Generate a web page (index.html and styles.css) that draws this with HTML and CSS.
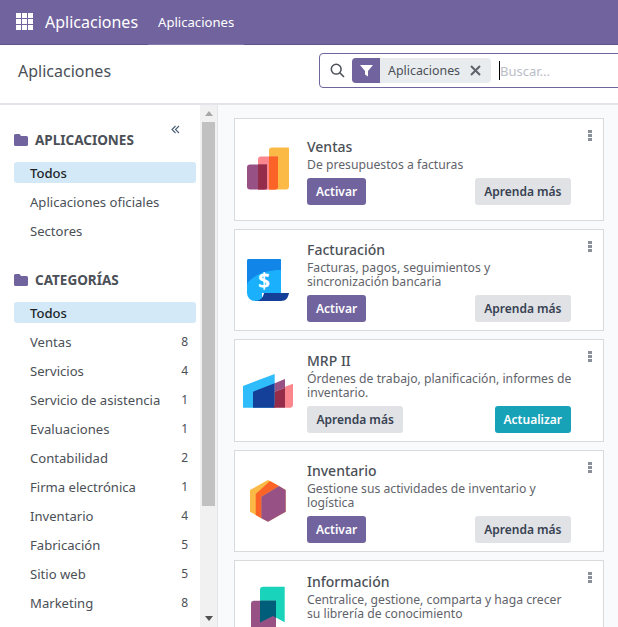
FILE: index.html
```html
<!DOCTYPE html>
<html lang="es">
<head>
<meta charset="utf-8">
<title>Aplicaciones</title>
<link rel="stylesheet" href="styles.css">
</head>
<body>
<header class="navbar">
  <svg class="apps-icon" width="17" height="17" viewBox="0 0 17 17" aria-hidden="true"><path fill="#fff" d="M0 0h5v5H0zM6 0h5v5H6zM12 0h5v5h-5zM0 6h5v5H0zM6 6h5v5H6zM12 6h5v5h-5zM0 12h5v5H0zM6 12h5v5H6zM12 12h5v5h-5z"/></svg>
  <span class="brand">Aplicaciones</span>
  <span class="nav-item">Aplicaciones</span>
</header>
<section class="control-panel">
  <h1 class="page-title">Aplicaciones</h1>
  <div class="searchbox">
    <svg class="glass" width="15" height="15" viewBox="0 0 15 15" aria-hidden="true"><circle cx="6.2" cy="6.2" r="4.9" fill="none" stroke="#4b5057" stroke-width="1.5"/><path d="M9.8 9.8l4.2 4.2" stroke="#4b5057" stroke-width="1.6" fill="none"/></svg>
    <div class="chip">
      <span class="chip-icon"><svg width="13" height="13" viewBox="0 0 13 13" aria-hidden="true"><path fill="#fff" d="M0 1h13L8 7v5.5L5 10.500V7z"/></svg></span>
      <span class="chip-label">Aplicaciones</span>
      <svg class="chip-x" width="11" height="11" viewBox="0 0 11 11" aria-hidden="true"><path d="M1 1l9 9M10 1l-9 9" stroke="#5f636a" stroke-width="2" fill="none"/></svg>
    </div>
    <span class="caret"></span>
    <span class="placeholder">Buscar...</span>
  </div>
</section>
<div class="content">
  <aside class="sidebar">
    <svg class="collapse" width="9" height="9" viewBox="0 0 9 9" aria-hidden="true"><path d="M4.500 1L1 4.500 4.500 8M8 1L4.500 4.500 8 8" stroke="#4b5c74" stroke-width="1.100" fill="none"/></svg>
    <h2 class="group-title first">
      <svg class="folder" width="14" height="12" viewBox="0 0 14 12" aria-hidden="true"><path fill="#71639e" d="M1.500 0h4l1.500 2h5.500A1.500 1.500 0 0 1 14 3.500v7a1.500 1.500 0 0 1-1.500 1.500h-11A1.500 1.500 0 0 1 0 10.500v-9A1.500 1.500 0 0 1 1.500 0z"/></svg>
      APLICACIONES
    </h2>
    <ul class="facets">
      <li class="facet active"><span>Todos</span></li>
      <li class="facet"><span>Aplicaciones oficiales</span></li>
      <li class="facet"><span>Sectores</span></li>
    </ul>
    <h2 class="group-title">
      <svg class="folder" width="14" height="12" viewBox="0 0 14 12" aria-hidden="true"><path fill="#71639e" d="M1.500 0h4l1.500 2h5.500A1.500 1.500 0 0 1 14 3.500v7a1.500 1.500 0 0 1-1.500 1.500h-11A1.500 1.500 0 0 1 0 10.500v-9A1.500 1.500 0 0 1 1.500 0z"/></svg>
      CATEGORÍAS
    </h2>
    <ul class="facets">
      <li class="facet active"><span>Todos</span></li>
      <li class="facet"><span>Ventas</span><b class="count">8</b></li>
      <li class="facet"><span>Servicios</span><b class="count">4</b></li>
      <li class="facet"><span>Servicio de asistencia</span><b class="count">1</b></li>
      <li class="facet"><span>Evaluaciones</span><b class="count">1</b></li>
      <li class="facet"><span>Contabilidad</span><b class="count">2</b></li>
      <li class="facet"><span>Firma electrónica</span><b class="count">1</b></li>
      <li class="facet"><span>Inventario</span><b class="count">4</b></li>
      <li class="facet"><span>Fabricación</span><b class="count">5</b></li>
      <li class="facet"><span>Sitio web</span><b class="count">5</b></li>
      <li class="facet"><span>Marketing</span><b class="count">8</b></li>
    </ul>
  </aside>
  <div class="scrollbar">
    <span class="arrow up"></span>
    <span class="thumb"></span>
    <span class="arrow down"></span>
  </div>
  <main class="kanban">
    <article class="card">
      <svg class="logo" width="64" height="64" viewBox="0 0 64 64" aria-hidden="true">
        <path fill="#fbb945" d="M36 10.500h17v39a3 3 0 0 1-3 3H33v-39a3 3 0 0 1 3-3z"/>
        <path fill="#fc868d" d="M25 19.500h17v30a3 3 0 0 1-3 3H22v-30a3 3 0 0 1 3-3z"/>
        <path fill="#fc6327" d="M33 19.500h9v30a3 3 0 0 1-3 3h-6z"/>
        <path fill="#985184" d="M14 27.500h17v25H14a3 3 0 0 1-3-3v-19a3 3 0 0 1 3-3z"/>
        <path fill="#952c4a" d="M22 27.500h9v22a3 3 0 0 1-3 3h-6z"/>
      </svg>
      <div class="card-body">
        <h3 class="app-name">Ventas</h3>
        <p class="app-desc">De presupuestos a facturas</p>
        <div class="actions"><button class="btn primary">Activar</button><button class="btn secondary">Aprenda más</button></div>
      </div>
      <span class="kebab"><i></i><i></i><i></i></span>
    </article>
    <article class="card">
      <svg class="logo" width="64" height="64" viewBox="0 0 64 64" aria-hidden="true">
        <path fill="#1ab0fc" d="M13 11h32v34H26v8h-7a8 8 0 0 1-8-8V13a2 2 0 0 1 2-2z"/>
        <path fill="#1286e8" d="M13 11h30a2 2 0 0 1 2 2v9C30 22 17 27 11 36V13a2 2 0 0 1 2-2z"/>
        <path fill="#14409a" d="M19 53c5 0 8-3 9-8h25c-1 5-3 8-8 8z"/>
        <text class="dollar" x="28" y="39.500" text-anchor="middle">$</text>
      </svg>
      <div class="card-body">
        <h3 class="app-name">Facturación</h3>
        <p class="app-desc">Facturas, pagos, seguimientos y sincronización bancaria</p>
        <div class="actions"><button class="btn primary">Activar</button><button class="btn secondary">Aprenda más</button></div>
      </div>
      <span class="kebab"><i></i><i></i><i></i></span>
    </article>
    <article class="card">
      <svg class="logo" width="64" height="64" viewBox="0 0 64 64" aria-hidden="true">
        <path fill="#2ebcfa" d="M7 28l31.700-12v33.700H7z"/>
        <path fill="#14409a" d="M17 33.700l21.700-8.400v24.400H17z"/>
        <path fill="#985184" d="M38.700 25.300L49 21v8.700l-10.300 4z"/>
        <path fill="#952c4a" d="M38.700 33.700L49 29.700v20H37.300l1.400-2.700z"/>
        <path fill="#fc868d" d="M49 28.700l8-3V47a2.700 2.700 0 0 1-2.300 2.700H49z"/>
      </svg>
      <div class="card-body">
        <h3 class="app-name">MRP II</h3>
        <p class="app-desc">Órdenes de trabajo, planificación, informes de inventario.</p>
        <div class="actions"><button class="btn secondary">Aprenda más</button><button class="btn teal">Actualizar</button></div>
      </div>
      <span class="kebab"><i></i><i></i><i></i></span>
    </article>
    <article class="card">
      <svg class="logo" width="64" height="64" viewBox="0 0 64 64" aria-hidden="true">
        <path fill="#fbb945" d="M32 11l17.700 10v21.700L32 52.700 14 42.700V21z"/>
        <path fill="#fc6327" d="M19.700 25L34 12l9 5-17.700 10.700v21.600L19.700 46z"/>
        <path fill="#985184" d="M25.300 27.700L43 17l6.700 4v21.700L32 52.700l-6.700-3.400z"/>
      </svg>
      <div class="card-body">
        <h3 class="app-name">Inventario</h3>
        <p class="app-desc">Gestione sus actividades de inventario y logística</p>
        <div class="actions"><button class="btn primary">Activar</button><button class="btn secondary">Aprenda más</button></div>
      </div>
      <span class="kebab"><i></i><i></i><i></i></span>
    </article>
    <article class="card">
      <svg class="logo" width="64" height="64" viewBox="0 0 64 64" aria-hidden="true">
        <path fill="#1ad3bb" d="M27 7.750h21.700v35.600L37 37.100l-13 6.300V10.750a3 3 0 0 1 3-3z"/>
        <path fill="#985184" d="M18 21.750h22v31H15v-28a3 3 0 0 1 3-3z"/>
        <path fill="#005e7a" d="M24 21.750h16v16.950l-3-1.600-13 6.300z"/>
      </svg>
      <div class="card-body">
        <h3 class="app-name">Información</h3>
        <p class="app-desc">Centralice, gestione, comparta y haga crecer su librería de conocimiento</p>
        <div class="actions"><button class="btn primary">Activar</button><button class="btn secondary">Aprenda más</button></div>
      </div>
      <span class="kebab"><i></i><i></i><i></i></span>
    </article>
  </main>
</div>
</body>
</html>
```

FILE: styles.css
```css
* { box-sizing: border-box; }
html, body { height: 100%; margin: 0; overflow: hidden; }
body {
  display: flex;
  flex-direction: column;
  font-family: "Noto Sans", "Open Sans", sans-serif;
  color: #4b5057;
  background: #fff;
}
.navbar {
  flex: 0 0 45px;
  display: flex;
  align-items: center;
  background: #71639e;
  border-bottom: 1px solid #5f5389;
  color: #fff;
  padding-left: 16px;
  position: relative;
}
.apps-icon { flex: none; margin-top: -1px; }
.brand { font-size: 16px; margin-left: 12px; }
.nav-item {
  font-size: 13.100px;
  align-self: stretch;
  display: flex;
  align-items: center;
  margin-left: 10px;
  padding: 0 10px;
  margin-bottom: -1px;
  border-bottom: 1px solid #8377ab;
}
.control-panel {
  flex: 0 0 60px;
  display: flex;
  align-items: center;
  padding: 0 0 7px 18px;
  border-bottom: 2px solid #e2e5e9;
  overflow: hidden;
}
.page-title {
  flex: 0 0 301px;
  margin: 1px 0 0;
  font-size: 16px;
  font-weight: 400;
  color: #4b5057;
}
.searchbox {
  flex: 0 0 340px;
  height: 35px;
  display: flex;
  align-items: center;
  border: 1px solid #71639e;
  border-radius: 4px;
  padding-left: 10px;
}
.glass { flex: none; }
.chip {
  flex: none;
  display: flex;
  align-items: center;
  width: 139px;
  height: 25px;
  margin-left: 7px;
  background: #e9ecef;
  border-radius: 4px;
  overflow: hidden;
}
.chip-icon {
  flex: 0 0 28px;
  align-self: stretch;
  display: flex;
  align-items: center;
  justify-content: center;
  background: #71639e;
}
.chip-label { font-size: 12.400px; margin-left: 8px; color: #4b5057; }
.chip-x { margin-left: 10px; }
.caret { flex: none; width: 1px; height: 19px; background: #000; margin-left: 8px; }
.placeholder { font-size: 13px; color: #b9bdc6; }
.content { flex: 1; min-height: 0; display: flex; }
.sidebar {
  flex: 0 0 200px;
  position: relative;
  padding: 0 4px 0 14px;
  overflow: hidden;
}
.collapse { position: absolute; left: 171px; top: 20px; }
.group-title {
  display: flex;
  align-items: center;
  gap: 7px;
  margin: 28px 0 0;
  height: 21px;
  font-size: 13.500px;
  font-weight: 700;
  color: #4b5057;
}
.group-title.first { margin-top: 24px; }
.facets { list-style: none; margin: 12px 0 0; padding: 0; }
.facet {
  display: flex;
  justify-content: space-between;
  align-items: center;
  height: 21px;
  margin-bottom: 8px;
  padding: 0 8px 0 16px;
  border-radius: 3px;
  font-size: 13.100px;
  color: #4b5057;
}
.facet.active { background: #d3e9f8; color: #212529; font-weight: 500; }
.count { font-weight: 400; font-size: 12px; }
.scrollbar {
  flex: 0 0 17px;
  display: flex;
  flex-direction: column;
  align-items: center;
  background: #f1f1f1;
  padding: 6px 0;
}
.thumb { width: 13px; height: 384px; margin-top: 6px; background: #c1c1c1; }
.arrow { width: 0; height: 0; border-left: 4px solid transparent; border-right: 4px solid transparent; }
.arrow.up { border-bottom: 5px solid #a8a8a8; }
.arrow.down { border-top: 5px solid #505050; margin-top: auto; }
.kanban {
  flex: 1;
  min-width: 0;
  background: #f9fafb;
  border-left: 1px solid #e2e5e9;
  padding: 13px 14px 0 16px;
  display: flex;
  flex-direction: column;
  gap: 8px;
  overflow: hidden;
}
.card {
  flex: 0 0 102.500px;
  display: flex;
  align-items: center;
  position: relative;
  background: #fff;
  border: 1px solid #d8dadd;
  padding-left: 1px;
}
.logo { flex: none; }
.dollar { font-family: "Noto Sans", sans-serif; font-weight: 700; font-size: 21px; fill: #fff; }
.card-body { flex: 1; min-width: 0; margin-left: 7px; padding: 3px 32px 0 0; }
.app-name { margin: 0; font-size: 14px; line-height: 20px; font-weight: 500; color: #4b5057; }
.app-desc { margin: 1px -1px 0 0; font-size: 12.200px; line-height: 14px; color: #5f636a; }
.actions { display: flex; justify-content: space-between; margin-top: 6px; }
.btn {
  height: 27px;
  border: 0;
  border-radius: 3px;
  padding: 0 9.500px;
  font-family: inherit;
  font-size: 12px;
  font-weight: 600;
}
.primary { background: #71639e; color: #fff; padding: 0 9px; }
.secondary { background: #e0e2e6; color: #374151; }
.teal { background: #17a2b8; color: #fff; padding: 0 9px; }
.kebab {
  position: absolute;
  right: 11px;
  top: 11px;
  display: flex;
  flex-direction: column;
  gap: 1px;
}
.kebab i { width: 4px; height: 3px; background: #8a9099; }
```
